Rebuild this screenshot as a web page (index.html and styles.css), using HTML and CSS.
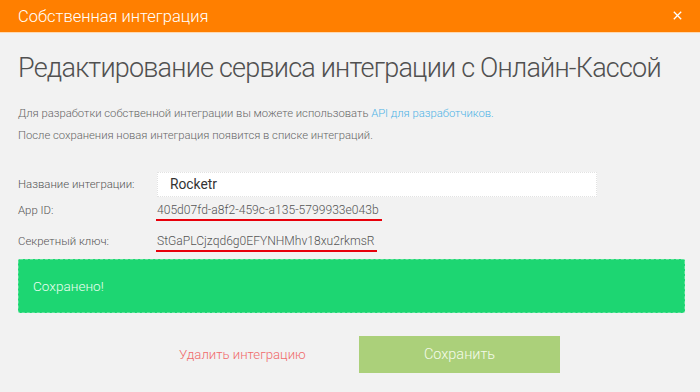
FILE: index.html
```html
<!DOCTYPE html>
<html lang="ru">
<head>
<meta charset="utf-8">
<link rel="stylesheet" href="styles.css">
</head>
<body>
<div class="modal">
  <header class="modal-head">
    <span class="modal-title">Собственная интеграция</span>
    <span class="close">
      <svg width="9" height="9" viewBox="0 0 9 9"><path d="M0.8 0.8L8.2 8.2M8.2 0.8L0.8 8.2" stroke="#fff" stroke-width="1.3" fill="none"/></svg>
    </span>
  </header>
  <main class="modal-body">
    <h1 class="heading">Редактирование сервиса интеграции с Онлайн-Кассой</h1>
    <p class="note">Для разработки собственной интеграции вы можете использовать <a class="link">API для разработчиков.</a></p>
    <p class="note">После сохранения новая интеграция появится в списке интеграций.</p>
    <div class="form">
      <div class="row row-input">
        <span class="label">Название интеграции:</span>
        <div class="input">Rocketr</div>
      </div>
      <div class="row">
        <span class="label">App ID:</span>
        <span class="value">405d07fd-a8f2-459c-a135-5799933e043b</span>
      </div>
      <div class="row">
        <span class="label">Секретный ключ:</span>
        <span class="value">StGaPLCjzqd6g0EFYNHMhv18xu2rkmsR</span>
      </div>
    </div>
    <div class="alert">Сохранено!</div>
    <div class="actions">
      <a class="delete">Удалить интеграцию</a>
      <button class="save">Сохранить</button>
    </div>
  </main>
</div>
</body>
</html>
```

FILE: styles.css
```css
* { box-sizing: border-box; }
html, body { margin: 0; padding: 0; }
body {
  width: 700px;
  height: 392px;
  background: #f2f2f2;
  font-family: Roboto, "Liberation Sans", sans-serif;
  overflow: hidden;
}
.modal-head {
  height: 33px;
  background: #ff7f00;
  border-bottom: 1px solid #ffd9b0;
  display: flex;
  align-items: center;
  justify-content: space-between;
  padding: 0 18px 0 18px;
}
.modal-title {
  color: #fff;
  font-size: 16.5px;
  font-weight: 300;
}
.close { display: flex; margin-top: -1px; }
.modal-body { padding: 18px 16px 0 18px; }
.heading {
  margin: 0 0 18px 0;
  font-size: 27px;
  font-weight: 300;
  color: #505050;
  line-height: 34px;
  letter-spacing: -0.8px;
  white-space: nowrap;
}
.note {
  margin: 0;
  font-size: 11.25px;
  font-weight: 300;
  color: #666;
  line-height: 22px;
  white-space: nowrap;
}
.link { color: #4db3e6; }
.form { margin-top: 24px; }
.row {
  display: flex;
  align-items: flex-start;
  height: 31px;
}
.row-input { height: 26px; align-items: center; }
.label {
  width: 139px;
  flex: none;
  font-size: 11.4px;
  font-weight: 300;
  color: #555;
  line-height: 18px;
  padding-top: 4px;
}
.row-input .label { padding-top: 0; }
.input {
  width: 440px;
  height: 25px;
  background: #fff;
  border: 1px dotted #e2e2e2;
  padding: 0 12px;
  display: flex;
  align-items: center;
  font-size: 13.8px;
  color: #333;
}
.value {
  font-size: 12.1px;
  font-weight: 300;
  color: #555;
  line-height: 18px;
  padding-top: 4px;
  border-bottom: 2px solid #e8000b;
  margin-left: -1px;
  padding-left: 1px;
  padding-right: 3px;
}
.alert {
  width: 667px;
  height: 54px;
  background: #1dd672;
  border-radius: 2px;
  border: 1px dashed #5ee39a;
  display: flex;
  align-items: center;
  padding-left: 14px;
  font-size: 13.6px;
  font-weight: 300;
  color: #e9fff0;
}
.actions {
  margin-top: 23px;
  display: flex;
  align-items: center;
}
.delete {
  margin-left: 161px;
  width: 180px;
  font-size: 13.2px;
  font-weight: 300;
  color: #f06a6a;
}
.save {
  width: 201px;
  height: 37px;
  border: 0;
  background: #abd07a;
  color: #f4fbe9;
  font-family: Roboto, "Liberation Sans", sans-serif;
  font-size: 14.5px;
  font-weight: 300;
  padding: 0;
}
```
